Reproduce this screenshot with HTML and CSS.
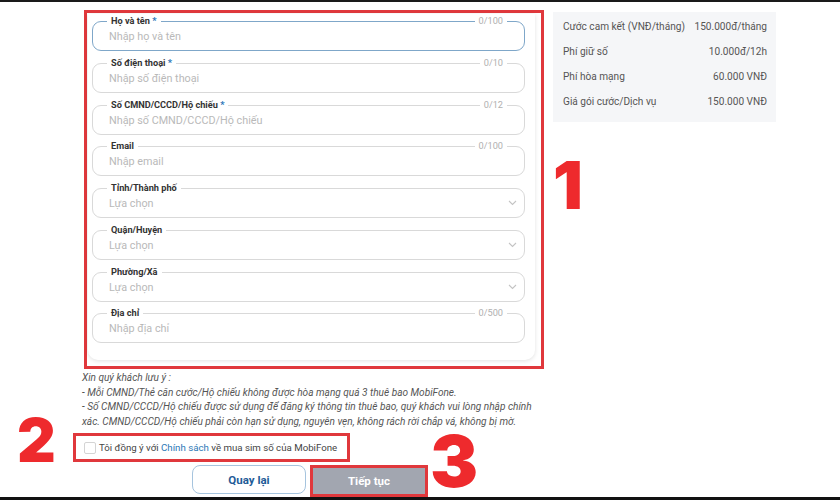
FILE: index.html
```html
<!DOCTYPE html>
<html lang="vi">
<head>
<meta charset="utf-8">
<title>Thông tin đăng ký</title>
<link rel="stylesheet" href="styles.css">
</head>
<body>
<div class="screen">
  <div class="content">
    <div class="left">
      <div class="mark form-mark">
        <div class="card">
          <div class="field focus">
            <span class="label">Họ và tên <b>*</b></span><span class="count">0/100</span>
            <span class="ph">Nhập họ và tên</span>
          </div>
          <div class="field">
            <span class="label">Số điện thoại <b>*</b></span><span class="count">0/10</span>
            <span class="ph">Nhập số điện thoại</span>
          </div>
          <div class="field">
            <span class="label">Số CMND/CCCD/Hộ chiếu <b>*</b></span><span class="count">0/12</span>
            <span class="ph">Nhập số CMND/CCCD/Hộ chiếu</span>
          </div>
          <div class="field">
            <span class="label">Email</span><span class="count">0/100</span>
            <span class="ph">Nhập email</span>
          </div>
          <div class="field select">
            <span class="label">Tỉnh/Thành phố</span>
            <span class="ph">Lựa chọn</span>
            <svg class="chev" width="9" height="6" viewBox="0 0 9 6"><path d="M1 1l3.5 3.5L8 1" fill="none" stroke="#c4c4c4" stroke-width="1.1"/></svg>
          </div>
          <div class="field select">
            <span class="label">Quận/Huyện</span>
            <span class="ph">Lựa chọn</span>
            <svg class="chev" width="9" height="6" viewBox="0 0 9 6"><path d="M1 1l3.5 3.5L8 1" fill="none" stroke="#c4c4c4" stroke-width="1.1"/></svg>
          </div>
          <div class="field select">
            <span class="label">Phường/Xã</span>
            <span class="ph">Lựa chọn</span>
            <svg class="chev" width="9" height="6" viewBox="0 0 9 6"><path d="M1 1l3.5 3.5L8 1" fill="none" stroke="#c4c4c4" stroke-width="1.1"/></svg>
          </div>
          <div class="field">
            <span class="label">Địa chỉ</span><span class="count">0/500</span>
            <span class="ph">Nhập địa chỉ</span>
          </div>
        </div>
      </div>
      <div class="notes">
        Xin quý khách lưu ý :<br>
        - Mỗi CMND/Thẻ căn cước/Hộ chiếu không được hòa mạng quá 3 thuê bao MobiFone.<br>
        - Số CMND/CCCD/Hộ chiếu được sử dụng để đăng ký thông tin thuê bao, quý khách vui lòng nhập chính<br>
        xác. CMND/CCCD/Hộ chiếu phải còn hạn sử dụng, nguyên vẹn, không rách rời chắp vá, không bị mờ.
      </div>
      <div class="mark agree">
        <span class="checkbox"></span>
        <span>Tôi đồng ý với <a class="link">Chính sách</a> về mua sim số của MobiFone</span>
      </div>
      <div class="actions">
        <button class="btn back">Quay lại</button>
        <div class="mark next-mark"><button class="btn next">Tiếp tục</button></div>
      </div>
    </div>
    <aside class="summary">
      <div class="row"><span>Cước cam kết (VNĐ/tháng)</span><span>150.000đ/tháng</span></div>
      <div class="row"><span>Phí giữ số</span><span>10.000đ/12h</span></div>
      <div class="row"><span>Phí hòa mạng</span><span>60.000 VNĐ</span></div>
      <div class="row"><span>Giá gói cước/Dịch vụ</span><span>150.000 VNĐ</span></div>
    </aside>
  </div>
  <div class="bottom-bar"></div>
  <span class="num n1">1</span>
  <span class="num n2">2</span>
  <span class="num n3">3</span>
</div>
</body>
</html>
```
FILE: styles.css
```css
html, body {
  margin: 0;
  padding: 0;
  background: #fff;
}
body {
  font-family: Roboto, "Noto Sans", sans-serif;
  color: #444;
}
.screen {
  position: relative;
  width: 840px;
  height: 500px;
  overflow: hidden;
  border-top: 2px solid #1a1a1a;
  box-sizing: border-box;
  display: flex;
  flex-direction: column;
}
.content {
  flex: 1;
  display: flex;
  align-items: flex-start;
  gap: 9px;
  padding: 8px 0 0 73px;
}
.left {
  width: 471px;
  display: flex;
  flex-direction: column;
}
.mark {
  border: 3px solid #e0383c;
  box-sizing: border-box;
}
.form-mark {
  margin-left: 11px;
  width: 460px;
  height: 359px;
  padding: 1px 0 0 1px;
}
.card {
  width: 447px;
  height: 346px;
  box-sizing: border-box;
  background: #fff;
  border-radius: 0 0 10px 10px;
  box-shadow: 0 1px 4px rgba(0,0,0,0.12);
  padding: 7px 10px 0 4px;
  display: flex;
  flex-direction: column;
  gap: 11.75px;
}
.field {
  position: relative;
  height: 30px;
  flex-shrink: 0;
  border: 1px solid #d9d9d9;
  border-radius: 9px;
  box-sizing: border-box;
  display: flex;
  align-items: center;
  padding-left: 16px;
}
.field.focus {
  border-color: #7fa7c9;
}
.label {
  position: absolute;
  left: 14px;
  top: -8px;
  padding: 0 4px;
  background: #fff;
  font-size: 9.2px;
  font-weight: 700;
  color: #333;
  line-height: 14px;
}
.label b {
  color: #2f77b8;
}
.count {
  position: absolute;
  right: 17px;
  top: -8px;
  padding: 0 4px;
  background: #fff;
  font-size: 9.2px;
  color: #b0b0b0;
  line-height: 14px;
}
.ph {
  font-size: 10.8px;
  color: #b9b9b9;
  padding-top: 1px;
}
.select {
  justify-content: space-between;
  padding-right: 7px;
}
.notes {
  padding: 2px 0 0 9px;
  font-size: 10.1px;
  font-style: italic;
  line-height: 14.5px;
  color: #555;
  white-space: nowrap;
  height: 59px;
}
.agree {
  margin-top: 3px;
  width: 277px;
  height: 29px;
  display: flex;
  align-items: center;
  gap: 3px;
  padding-left: 8px;
  font-size: 9.7px;
  color: #444;
  white-space: nowrap;
}
.checkbox {
  flex-shrink: 0;
  width: 12px;
  height: 12px;
  box-sizing: border-box;
  border: 1px solid #d4d4d4;
  border-radius: 2px;
}
.link {
  color: #2b78b6;
}
.actions {
  margin-top: 3px;
  display: flex;
  gap: 4px;
  padding-left: 119px;
}
.btn {
  font-family: inherit;
  font-size: 11.5px;
  font-weight: 700;
  border-radius: 8px;
  cursor: pointer;
}
.back {
  width: 114px;
  height: 29px;
  background: #fff;
  border: 1px solid #a6c4de;
  color: #1f5c98;
}
.next-mark {
  width: 118px;
  height: 32px;
  display: flex;
}
.next {
  flex: 1;
  border: none;
  border-radius: 0;
  background: #a2a6b0;
  color: #fff;
}
.summary {
  width: 223px;
  margin-top: 2px;
  background: #f5f6f8;
  padding: 2px 9px 8px 10px;
  box-sizing: border-box;
  font-size: 10.1px;
  color: #555;
  white-space: nowrap;
}
.row {
  display: flex;
  justify-content: space-between;
  height: 25px;
  align-items: center;
}
.bottom-bar {
  height: 7px;
  background: #111;
}
.num {
  position: absolute;
  font-family: "Inter", "DejaVu Sans", sans-serif;
  font-weight: 900;
  color: #ee2a2d;
  line-height: 0.74;
}
.n1 { left: 553px; top: 159px; font-size: 66px; }
.n2 { left: 17px; top: 416px; font-size: 60px; }
.n3 { left: 430px; top: 432px; font-size: 72px; }
```
